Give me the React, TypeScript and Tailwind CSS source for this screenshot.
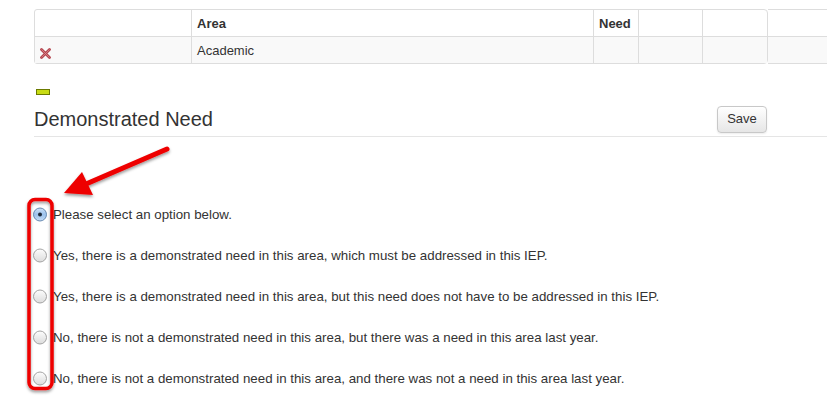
import { useState } from "react";

const options = [
  "Please select an option below.",
  "Yes, there is a demonstrated need in this area, which must be addressed in this IEP.",
  "Yes, there is a demonstrated need in this area, but this need does not have to be addressed in this IEP.",
  "No, there is not a demonstrated need in this area, but there was a need in this area last year.",
  "No, there is not a demonstrated need in this area, and there was not a need in this area last year.",
];

function Radio({ checked }: { checked: boolean }) {
  return (
    <svg width="14" height="15" viewBox="0 0 14 15" className="shrink-0">
      <defs>
        <linearGradient id="rOff" x1="0" y1="0" x2="0" y2="1">
          <stop offset="0" stopColor="#fdfdfd" />
          <stop offset="0.5" stopColor="#ececec" />
          <stop offset="1" stopColor="#dcdcdc" />
        </linearGradient>
        <linearGradient id="rOn" x1="0" y1="0" x2="0" y2="1">
          <stop offset="0" stopColor="#cfe2f7" />
          <stop offset="0.5" stopColor="#9cc2ec" />
          <stop offset="1" stopColor="#c6dcf5" />
        </linearGradient>
      </defs>
      <circle
        cx="7"
        cy="7.5"
        r="6.5"
        fill={checked ? "url(#rOn)" : "url(#rOff)"}
        stroke={checked ? "#5a7fa8" : "#9a9a9a"}
        strokeWidth="0.9"
      />
      {checked && <circle cx="7" cy="7.5" r="2" fill="#1d2a3a" />}
    </svg>
  );
}

function RemoveIcon() {
  return (
    <svg width="11" height="11" viewBox="0 0 11 11">
      <path d="M1.5 1.5 L9.5 9.5 M9.5 1.5 L1.5 9.5" stroke="#b5464f" strokeWidth="2.8" strokeLinecap="round" />
      <path d="M1.8 1.8 L9.2 9.2 M9.2 1.8 L1.8 9.2" stroke="#d98a90" strokeWidth="0.8" strokeLinecap="round" />
    </svg>
  );
}

export default function App() {
  const [selected, setSelected] = useState(0);

  return (
    <div
      className="relative w-[827px] h-[408px] overflow-hidden bg-white text-[13px] text-[#333]"
      style={{ fontFamily: '"Liberation Sans", Arial, sans-serif' }}
    >
      <div className="pt-[9px] pl-[34px] flex">
        <table className="w-[734px] table-fixed border-separate border-spacing-0 border border-[#ddd] rounded-r-[4px] rounded-l-[3px]">
          <colgroup>
            <col className="w-[157px]" />
            <col className="w-[402px]" />
            <col className="w-[45px]" />
            <col className="w-[64px]" />
            <col />
          </colgroup>
          <thead>
            <tr className="h-[26px]">
              <th className="border-r border-[#ddd]" />
              <th className="border-r border-[#ddd] text-left font-bold px-[5px] pt-[2px]">Area</th>
              <th className="border-r border-[#ddd] text-left font-bold px-[5px] pt-[2px]">Need</th>
              <th className="border-r border-[#ddd]" />
              <th />
            </tr>
          </thead>
          <tbody>
            <tr className="h-[26px] bg-[#f9f9f9]">
              <td className="border-t border-r border-[#ddd] pl-[5px] pt-[6px]">
                <RemoveIcon />
              </td>
              <td className="border-t border-r border-[#ddd] px-[5px] align-top pt-[4px]">Academic</td>
              <td className="border-t border-r border-[#ddd]" />
              <td className="border-t border-r border-[#ddd]" />
              <td className="border-t border-[#ddd]" />
            </tr>
          </tbody>
        </table>
        <div className="flex-1 flex flex-col border-y border-[#ddd]">
          <div className="h-[26px]" />
          <div className="h-[27px] border-t border-[#ddd] bg-[#f9f9f9]" />
        </div>
      </div>

      <div className="pl-[36px] mt-[25px]">
        <div className="w-[14px] h-[6px] bg-[#c8dc14] border border-[#6b7a00]" />
      </div>

      <div className="ml-[34px] mt-[7px] pr-[60px] flex items-center justify-between border-b border-[#e5e5e5] h-[35px]">
        <h2 className="text-[20px] leading-none text-[#333]">Demonstrated Need</h2>
        <button className="w-[50px] h-[27px] rounded-[4px] border border-[#c8c8c8] bg-gradient-to-b from-white to-[#e6e6e6] text-[13px] text-[#333] shadow-[0_1px_2px_rgba(0,0,0,0.08)]">
          Save
        </button>
      </div>

      <div className="pl-[33px] pt-[57px] flex flex-col">
        {options.map((opt, i) => (
          <label key={i} className="h-[41px] flex items-center cursor-pointer" onClick={() => setSelected(i)}>
            <Radio checked={selected === i} />
            <span className="ml-[6px] leading-none text-[13.3px]">{opt}</span>
          </label>
        ))}
      </div>

      <svg className="absolute left-0 top-0 pointer-events-none" width="827" height="408">
        <defs>
          <filter id="sh" x="-20%" y="-20%" width="140%" height="140%">
            <feDropShadow dx="0" dy="2" stdDeviation="1.5" floodColor="#000" floodOpacity="0.4" />
          </filter>
        </defs>
        <g filter="url(#sh)">
          <line x1="167" y1="149" x2="86" y2="184" stroke="#ee0000" strokeWidth="5" strokeLinecap="round" />
          <polygon points="64,193 82,172 93,195" fill="#ee0000" />
          <rect x="29" y="199.5" width="23" height="189" rx="6" fill="none" stroke="#ee0000" strokeWidth="3.5" />
        </g>
      </svg>
    </div>
  );
}
